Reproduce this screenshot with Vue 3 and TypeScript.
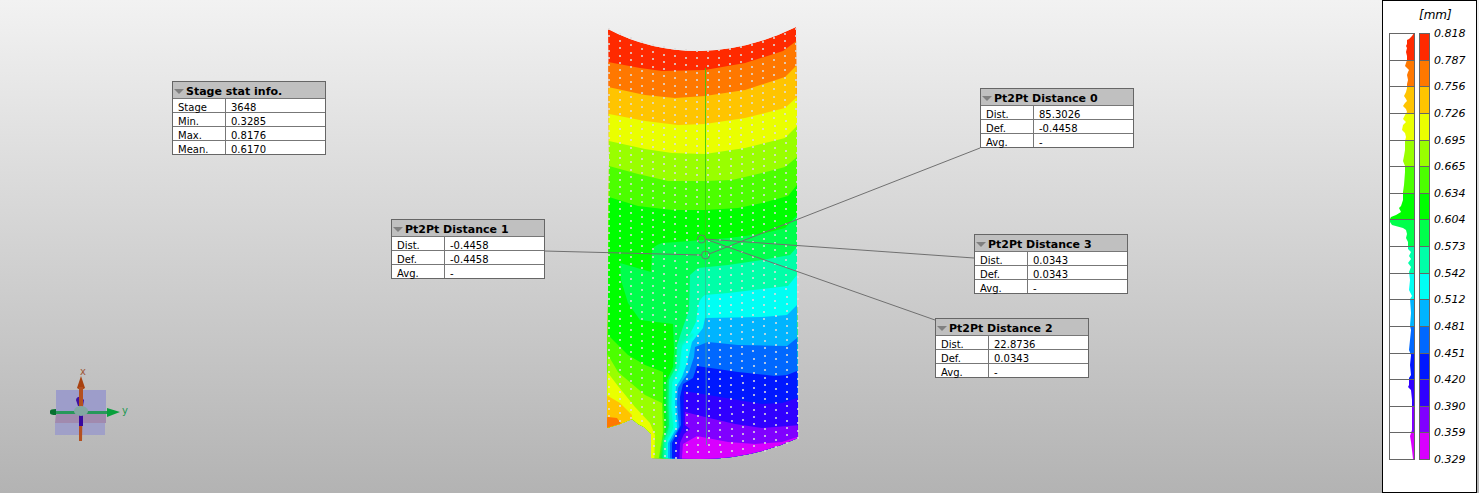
<script setup lang="ts">
import { ref } from 'vue'

interface Row { label: string; value: string }
interface Panel { id: string; title: string; x: number; y: number; rows: Row[] }

const rows = (dist: string, def: string): Row[] => [
  { label: 'Dist.', value: dist },
  { label: 'Def.', value: def },
  { label: 'Avg.', value: '-' },
]

const panels: Panel[] = [
  {
    id: 'stage', title: 'Stage stat info.', x: 172, y: 81,
    rows: [
      { label: 'Stage', value: '3648' },
      { label: 'Min.', value: '0.3285' },
      { label: 'Max.', value: '0.8176' },
      { label: 'Mean.', value: '0.6170' },
    ],
  },
  { id: 'd1', title: 'Pt2Pt Distance 1', x: 391, y: 219, rows: rows('-0.4458', '-0.4458') },
  { id: 'd0', title: 'Pt2Pt Distance 0', x: 980, y: 88, rows: rows('85.3026', '-0.4458') },
  { id: 'd3', title: 'Pt2Pt Distance 3', x: 974, y: 234, rows: rows('0.0343', '0.0343') },
  { id: 'd2', title: 'Pt2Pt Distance 2', x: 935, y: 318, rows: rows('22.8736', '0.0343') },
]

const collapsed = ref<Record<string, boolean>>({})
const toggle = (id: string) => { collapsed.value[id] = !collapsed.value[id] }

const colors = [
  '#ff2a00', '#ff7800', '#ffc400', '#eaff00', '#99ff00', '#4cff00', '#00ff00', '#00ff4c',
  '#00ffa8', '#00fff4', '#00b4ff', '#0068ff', '#0018ff', '#3000ff', '#8000ff', '#d800ff',
]
const ticks = [
  '0.818', '0.787', '0.756', '0.726', '0.695', '0.665', '0.634', '0.604', '0.573',
  '0.542', '0.512', '0.481', '0.451', '0.420', '0.390', '0.359', '0.329',
]
const tickY = (i: number) => Math.round((426 * i) / 16)

// Left edge of the histogram, as [y, x] inside the 26 x 427 plot.
const edge: [number, number][] = [
  [0, 25], [3, 23], [6, 20], [7, 18], [11, 18], [13, 17], [15, 18], [19, 17], [23, 18], [27, 18],
  [30, 17], [33, 16], [35, 18], [37, 20], [39, 19], [42, 18], [47, 19], [51, 18], [55, 18], [59, 17],
  [63, 15], [66, 17], [68, 18], [70, 16], [73, 14], [76, 17], [79, 18], [82, 16], [86, 14], [89, 17],
  [92, 14], [97, 13], [100, 16], [104, 17], [108, 16], [117, 16], [123, 15], [128, 14], [133, 16],
  [139, 16], [152, 15], [159, 14], [167, 14], [173, 12], [175, 10], [179, 12], [182, 7], [184, 2],
  [186, 1], [189, 1], [192, 3], [195, 14], [197, 17], [201, 18], [205, 17], [209, 19], [216, 19],
  [219, 22], [223, 20], [226, 22], [230, 19], [234, 22], [239, 20], [247, 21], [257, 20], [263, 23],
  [266, 21], [280, 22], [293, 21], [297, 22], [307, 21], [317, 20], [322, 22], [332, 21], [342, 22],
  [345, 20], [352, 20], [354, 19], [357, 22], [367, 23], [397, 23], [403, 21], [409, 22], [417, 23],
  [426, 24],
]
const histogram = 'M' + edge.map(([y, x]) => `${x} ${y}`).join('L') + 'L25 426V0Z'

const outline =
  'M608 29Q649 51 700 51Q749 50 796 27L797 120V300L798 438' +
  'Q752 459 700 459L651 458V434L644 427Q637 424 632 419L620 424L607 428L608 300L609 160Z'

// Contour bands, painted in order; every band runs on to the lower edge.
const bands: { c: number; d: string }[] = [
  { c: 1, d: 'M600 61L608 62L640 68L662 71L705 70L745 63L783 51L795 42L800 38V470H600Z' },
  { c: 2, d: 'M600 85L608 87L645 95L675 98L705 96L745 90L785 77L795 67L800 62V470H600Z' },
  { c: 3, d: 'M600 111L609 114L645 121L678 125L705 124L745 118L785 108L797 97L800 94V470H600Z' },
  { c: 4, d: 'M600 139L609 141L645 149L672 153L705 154L745 148L785 138L797 126L800 123V470H600Z' },
  { c: 5, d: 'M600 163L609 166L638 174L668 181L705 181L732 180L762 173L785 167L797 157L800 154V470H600Z' },
  { c: 6, d: 'M600 193L609 197L638 206L672 210L705 210L738 208L762 203L788 196L797 185L800 182V470H600Z' },
  { c: 5, d: 'M600 328L608 335L628 355L645 365L663 372L663 400L665 433L660 470H600Z' },
  { c: 4, d: 'M600 345L608 355L618 372L645 395L662 403L663 433L657 470H600Z' },
  { c: 3, d: 'M600 366L608 373L618 386L635 407L650 423L655 435L654 470H600Z' },
  { c: 2, d: 'M600 392L608 396L620 403L632 415L632 425H600Z' },
  { c: 1, d: 'M600 418L608 417L617 418L622 425L608 430H600Z' },
  { c: 7, d: 'M800 211L797 215L785 228L762 234L728 238L690 241L662 243Q652 246 652 252L651 272L620 263L621 280L628 303L640 320L673 324L674 350L673 367L667 380L667 427L660 470H800Z' },
  { c: 8, d: 'M800 243L797 247L790 255L762 260L728 265L698 268L690 275L689 310L683 327L677 345L676 367L669 380L669 425L665 440L663 470H800Z' },
  { c: 9, d: 'M800 271L797 275L788 286L762 289L728 293L705 295Q699 299 698 307L696 322L690 334L682 345L679 367L672 382L671 407L673 428L667 440L665 470H800Z' },
  { c: 10, d: 'M800 302L797 305L787 315L762 317L705 318L703 328L692 342L687 363L682 377L676 387L675 403L677 427L668 443V470H800Z' },
  { c: 11, d: 'M800 335L797 338L787 346L738 345L708 342L695 347L694 357L689 372L683 380L678 388L677 403L679 427L670 443V470H800Z' },
  { c: 12, d: 'M800 369L797 371L787 375L775 376L738 372L697 366L693 378L683 384L680 397L681 425L672 443V470H800Z' },
  { c: 13, d: 'M800 397L782 403L762 404L738 400L708 395L684 391L683 427L676 443L675 470H800Z' },
  { c: 14, d: 'M800 425L762 428L735 424L705 417L685 412L685 425L690 429L684 434L680 443L679 470H800Z' },
  { c: 15, d: 'M800 436L782 442L755 444L728 442L697 436L690 440L683 444L681 470H800Z' },
]

// Measuring points: 18 columns that follow the curved upper and lower rims.
const dots: { x: number; y: number }[] = []
for (let c = 0; c < 18; c++) {
  const u = (c - 8.5) / 8.5
  const top = 50 - 22 * u * u
  const bottom = c < 3 ? 421 : c === 3 ? 425 : c > 8 ? 458 - 20 * u * u : 457
  for (let y = top; y < bottom; y += 7.3) {
    const x = 608 + c * 11 + (c * (y - 29)) / 2800
    dots.push({ x: Math.round(x), y: Math.round(y) })
  }
}
</script>

<template>
  <div class="viewer">
    <main class="canvas">
      <svg class="scene" aria-hidden="true">
        <defs>
          <clipPath id="surface"><path :d="outline" /></clipPath>
          <filter id="soft" x="-10%" y="-10%" width="120%" height="120%"><feGaussianBlur stdDeviation="1.2" /></filter>
        </defs>
        <g clip-path="url(#surface)">
          <path :d="outline" :fill="colors[0]" />
          <path v-for="(b, i) in bands" :key="i" :d="b.d" :fill="colors[b.c]" />
          <g fill="none" filter="url(#soft)">
            <path d="M666 382L667 427L661 462" stroke="#00f050" stroke-width="3" />
            <path d="M693 334L680 346L678 367L671 382L670 407L672 427L665 441V462" stroke="#00ffc0" stroke-width="3" />
          </g>
        </g>
        <rect v-for="(d, i) in dots" :key="i" :x="d.x" :y="d.y" width="2" height="2" fill="#dcdcdc" fill-opacity=".78" />
        <path d="M705.5 68V255" stroke="#38cc10" stroke-opacity=".9" stroke-width="1" />
        <path d="M705.5 255L706.5 445" stroke="#40a890" stroke-opacity=".7" fill="none" />
        <g fill="none" stroke="#707070">
          <path d="M544 251L701 255M709 254L980 148M705 239L974 258M705 239L935 320" />
          <circle cx="701.5" cy="239" r="4" />
          <circle cx="705.5" cy="255" r="4" />
        </g>
        <g class="gizmo">
          <path d="M56 390H106V413H56Z" fill="#9d9dca" />
          <path d="M56 413H106V423H55Z" fill="#a18aae" />
          <path d="M55 423H105V435H55Z" fill="#a0a0c8" />
          <path d="M79 387H83L82 441H79Z" fill="#b45020" />
          <path d="M81 376L85 388Q81 391 77 388Z" fill="#a84210" />
          <path d="M76 400Q77 396 81 397L84 400L83 406H78Z" fill="#4010a0" />
          <path d="M79 387H83V407H79Z" fill="#b45020" />
          <path d="M53 411H108V414H53Z" fill="#28985a" />
          <path d="M50 411Q50 409 56 409V415Q50 415 50 413Z" fill="#087030" />
          <path d="M107 408L120 412L107 417Z" fill="#08a03c" />
          <path d="M79 414H83V426H79Z" fill="#3808a0" />
          <ellipse cx="81" cy="411" rx="7" ry="5" fill="#83a7a2" />
          <text x="80" y="375" fill="#a05838">x</text>
          <text x="122" y="414" fill="#209850">y</text>
        </g>
      </svg>

      <table v-for="p in panels" :key="p.id" class="panel" :style="{ left: p.x + 'px', top: p.y + 'px' }">
        <colgroup><col class="key"><col></colgroup>
        <thead>
          <tr>
            <th colspan="2">
              <button type="button" :aria-expanded="!collapsed[p.id]" @click="toggle(p.id)">
                <svg width="10" height="5" viewBox="0 0 10 5" aria-hidden="true"><path d="M0 0H10L5 5Z" fill="#808080" /></svg>
                <span>{{ p.title }}</span>
              </button>
            </th>
          </tr>
        </thead>
        <tbody v-show="!collapsed[p.id]">
          <tr v-for="r in p.rows" :key="r.label">
            <th scope="row">{{ r.label }}</th>
            <td>{{ r.value }}</td>
          </tr>
        </tbody>
      </table>
    </main>

    <aside class="legend">
      <div class="unit">[mm]</div>
      <div class="scale">
        <svg class="plot" viewBox="0 0 26 427" preserveAspectRatio="none" aria-hidden="true">
          <defs><clipPath id="hist"><path :d="histogram" /></clipPath></defs>
          <g clip-path="url(#hist)">
            <rect v-for="(c, i) in colors" :key="c" x="0" :y="tickY(i)" width="26" :height="tickY(i + 1) - tickY(i)" :fill="c" />
          </g>
          <g fill="none" stroke="#666">
            <path v-for="(t, i) in ticks" :key="t" :d="`M0 ${tickY(i) + 0.5}H26`" />
            <path d="M.5 0V427M25.5 0V427" />
          </g>
        </svg>
        <svg class="bar" viewBox="0 0 11 427" preserveAspectRatio="none" aria-hidden="true">
          <rect v-for="(c, i) in colors" :key="c" x="0" :y="tickY(i)" width="11" :height="tickY(i + 1) - tickY(i)" :fill="c" />
          <g fill="none" stroke="#666">
            <path v-for="(t, i) in ticks" :key="t" :d="`M0 ${tickY(i) + 0.5}H11`" />
            <path d="M.5 0V427M10.5 0V427" />
          </g>
        </svg>
        <ul>
          <li v-for="t in ticks" :key="t">{{ t }}</li>
        </ul>
      </div>
    </aside>
  </div>
</template>

<style>
body {
  margin: 0;
}
</style>

<style scoped>
.viewer {
  display: flex;
  box-sizing: border-box;
  min-height: 100vh;
  padding-right: 2px;
  overflow: hidden;
  background: linear-gradient(#f2f2f2, #b3b3b3);
  color: #000;
  font-family: Verdana, "DejaVu Sans", sans-serif;
}

.canvas {
  position: relative;
  flex: 1;
  min-width: 0;
}

.scene {
  position: absolute;
  inset: 0;
  width: 100%;
  height: 100%;
}

.gizmo text {
  font-size: 10px;
}

.panel {
  position: absolute;
  width: 154px;
  table-layout: fixed;
  border: 1px solid #666;
  border-collapse: separate;
  border-spacing: 0;
  background: #fff;
  font-size: 10px;
}

.key {
  width: 52px;
}

.panel thead th {
  padding: 0;
  background: #c0c0c0;
}

.panel button {
  display: flex;
  align-items: center;
  gap: 2px;
  width: 100%;
  height: 16px;
  padding: 3px 0 0 1px;
  border: 0;
  background: none;
  color: inherit;
  font: bold 11px/13px Verdana, "DejaVu Sans", sans-serif;
  text-align: left;
  white-space: nowrap;
  cursor: pointer;
}

.panel tbody th,
.panel td {
  padding: 5px 0 0 5px;
  border-top: 1px solid #777;
  font-weight: normal;
  line-height: 8px;
  text-align: left;
}

.panel td {
  border-left: 1px solid #777;
}

.legend {
  display: flex;
  flex-direction: column;
  box-sizing: border-box;
  width: 95px;
  padding: 6px 0 32px 6px;
  border: 1px solid #000;
  background: #fff;
  font-size: 11px;
  font-style: italic;
}

.unit {
  padding-left: 30px;
  font-size: 12px;
  line-height: 16px;
  margin-bottom: 10px;
}

.scale {
  display: flex;
  flex: 1;
  min-height: 340px;
}

.plot {
  width: 26px;
  height: 100%;
}

.bar {
  width: 11px;
  height: 100%;
  margin-left: 4px;
}

ul {
  display: flex;
  flex-direction: column;
  justify-content: space-between;
  margin: 0;
  padding: 1px 0 0 4px;
  list-style: none;
}

li {
  height: 0;
  line-height: 0;
}
</style>
